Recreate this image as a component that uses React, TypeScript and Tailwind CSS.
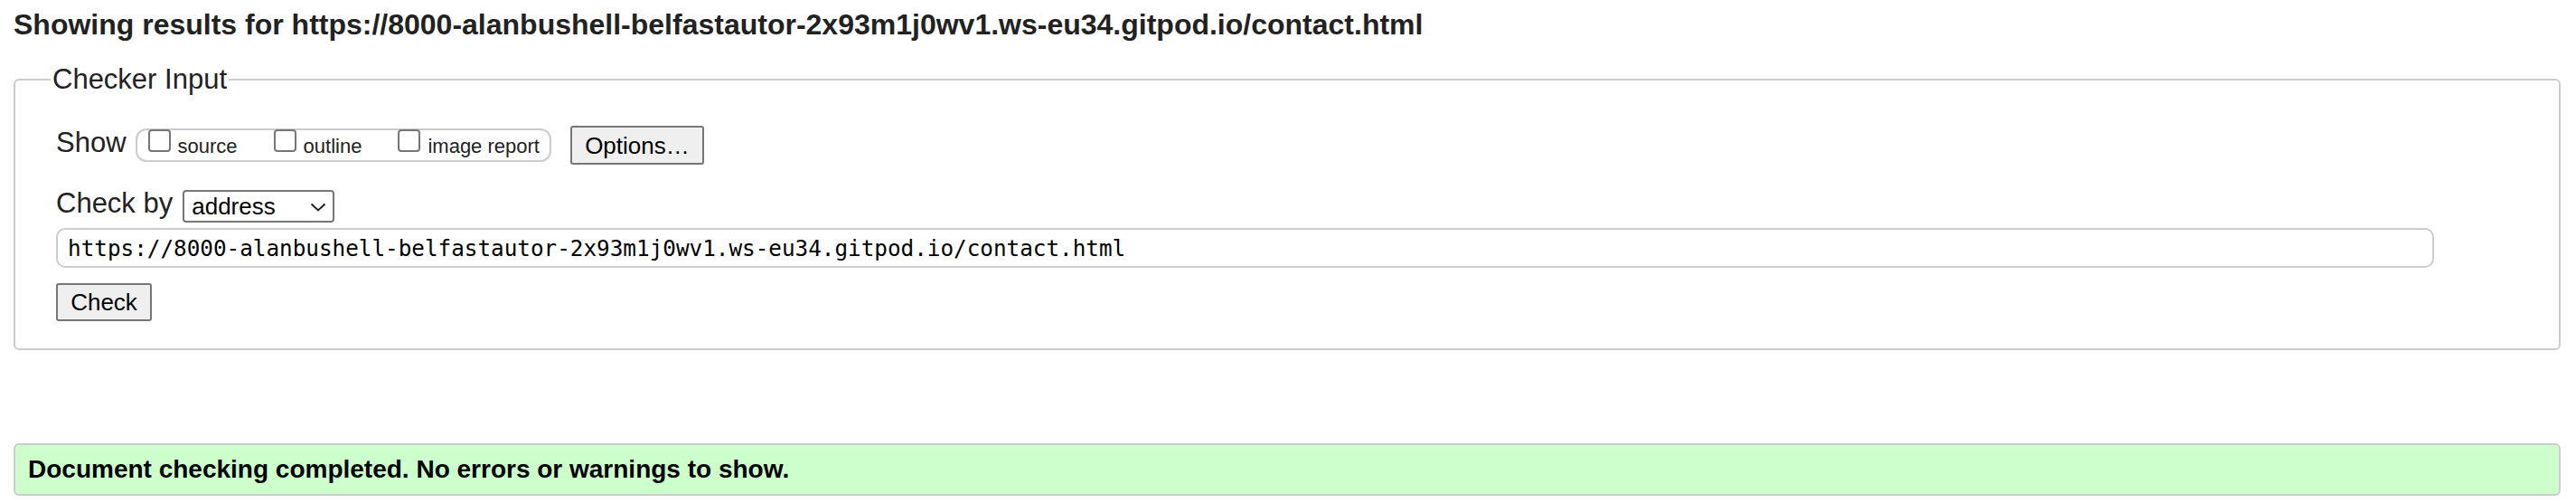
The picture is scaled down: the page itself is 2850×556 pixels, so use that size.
import React from "react";

const url =
  "https://8000-alanbushell-belfastautor-2x93m1j0wv1.ws-eu34.gitpod.io/contact.html";

const showOptions = ["source", "outline", "image report"];

const App = () => {
  return (
    <div className="w-[2850px] h-[556px] bg-white text-[#222] font-['Liberation_Sans',Arial,sans-serif]">
      {/* Result heading */}
      <h2 className="pl-[15px] pt-[9px] text-[32px] leading-[36px] font-bold">
        Showing results for {url}
      </h2>

      {/* Checker form */}
      <fieldset className="mt-[25px] ml-[15px] mr-[17px] border-2 border-[#cccccc] rounded-[6px] pl-[45px] pt-[33px] pb-[30px]">
        <legend className="-ml-[6px] px-[2px] text-[31px] leading-[36px]">
          Checker Input
        </legend>

        <div className="flex items-center h-[43px]">
          <span className="text-[31px] leading-[36px] mb-[6px]">Show</span>
          <div className="ml-[10px] flex items-start h-[37px] border-2 border-[#cccccc] rounded-[12px] pl-[12px] pr-[11px]">
            {showOptions.map((opt, i) => (
              <label
                key={opt}
                className={`flex items-start ${i > 0 ? "ml-[40px]" : ""}`}
              >
                <span className="-mt-[1px] w-[25px] h-[25px] border-2 border-[#767676] rounded-[4px] bg-white" />
                <span className="ml-[8px] mt-[5px] text-[22px] leading-[25px]">
                  {opt}
                </span>
              </label>
            ))}
          </div>
          <button className="ml-[21px] w-[148px] h-[43px] border-2 border-[#767676] rounded-[3px] bg-[#efefef] text-[26px] leading-[30px] text-black">
            Options…
          </button>
        </div>

        <div className="mt-[28px] flex items-center h-[36px]">
          <span className="text-[31px] leading-[36px] mb-[6px]">Check by</span>
          <div className="relative ml-[11px] w-[168px] h-[36px] border-2 border-[#767676] rounded-[4px] bg-white">
            <select className="appearance-none w-full h-full pl-[8px] text-[26px] leading-[30px] text-black outline-none">
              <option>address</option>
            </select>
            <svg
              className="absolute right-[7px] top-[12px] pointer-events-none"
              width="18"
              height="10"
              viewBox="0 0 18 10"
            >
              <polyline
                points="1.5,1.5 9,8.5 16.5,1.5"
                fill="none"
                stroke="#222"
                strokeWidth="2"
              />
            </svg>
          </div>
        </div>

        <input
          readOnly
          value={url}
          className="mt-[6px] block w-[2631px] h-[44px] border-2 border-[#cccccc] rounded-[10px] pl-[11px] text-[24.3px] text-black font-['DejaVu_Sans_Mono',monospace] outline-none"
        />

        <button className="mt-[17px] block w-[106px] h-[42px] border-2 border-[#767676] rounded-[3px] bg-[#efefef] text-[26px] leading-[30px] text-black">
          Check
        </button>
      </fieldset>

      {/* Success message */}
      <div className="mt-[103px] ml-[15px] mr-[17px] h-[58px] flex items-center border-2 border-[#cccccc] rounded-[6px] bg-[#ccffcc] pl-[14px]">
        <p className="text-[28px] font-bold text-black">
          Document checking completed. No errors or warnings to show.
        </p>
      </div>
    </div>
  );
};

export default App;
